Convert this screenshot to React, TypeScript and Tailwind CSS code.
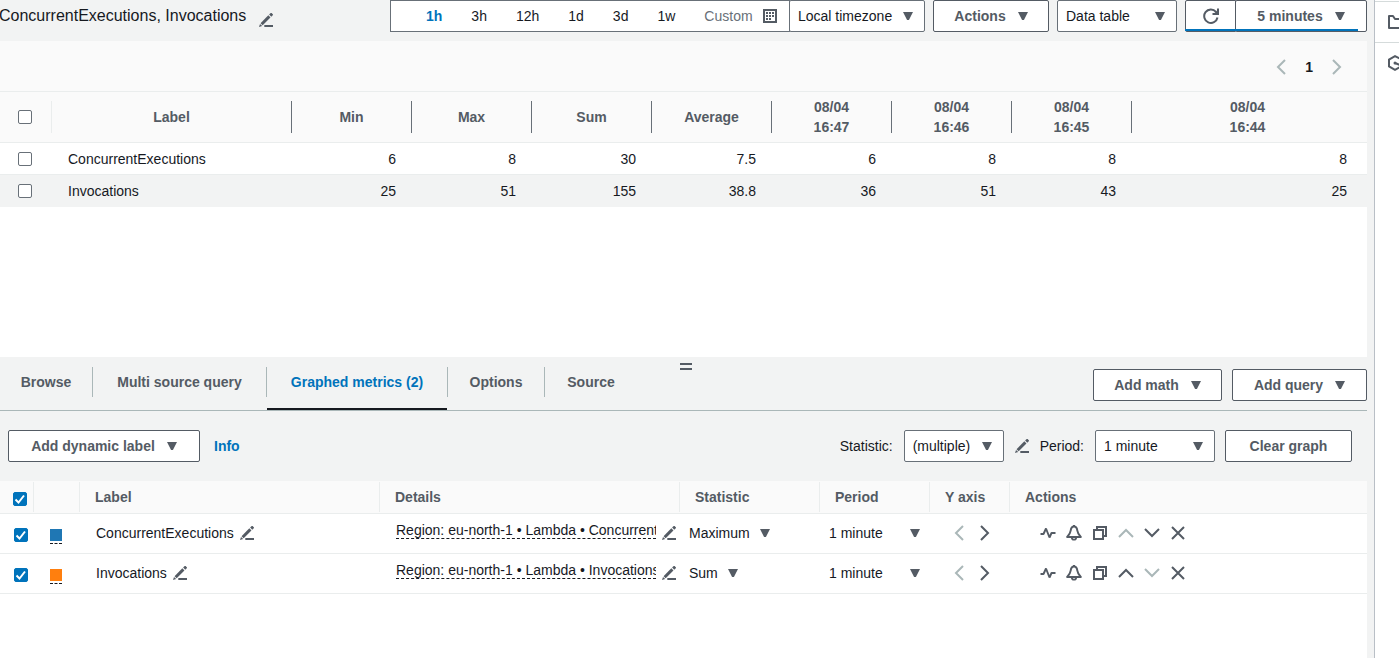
import React from "react";

type IconProps = { className?: string };

const Pencil = () => (
  <svg viewBox="0 0 14 14" className="size-3.5 shrink-0 text-[#545b64]" fill="none" stroke="currentColor" aria-hidden="true">
    <path d="M2.6 11.2 10.4 3.4" strokeWidth="3" />
    <path d="M11.2 2.6 13.2.6" strokeWidth="3" />
    <path d="M1 11 3.2 13 0 14z" fill="currentColor" stroke="none" />
    <path d="M5.3 13H14" strokeWidth="2" />
  </svg>
);

const Caret = ({ className = "" }: IconProps) => (
  <svg viewBox="0 0 10 8" className={`h-2 w-2.5 shrink-0 text-[#545b64] ${className}`} fill="currentColor" aria-hidden="true">
    <path d="M0 0H10L6.300 7.300a1.400 1.400 0 0 1-2.600 0z" />
  </svg>
);

const Icon = ({ children, className = "" }: { children: React.ReactNode; className?: string }) => (
  <svg viewBox="0 0 16 16" className={`size-4 shrink-0 ${className}`} fill="none" stroke="currentColor" strokeWidth="2" aria-hidden="true">
    {children}
  </svg>
);

const ChevronLeft = () => <Icon><path d="M12 1 5 8l7 7" /></Icon>;
const ChevronRight = () => <Icon><path d="m4 1 7 7-7 7" /></Icon>;
const ChevronUp = () => <Icon><path d="m1 12 7-7 7 7" /></Icon>;
const ChevronDown = () => <Icon><path d="m1 4 7 7 7-7" /></Icon>;
const Close = () => <Icon><path d="m2 2 12 12M14 2 2 14" /></Icon>;
const Pulse = () => <Icon><path d="M.5 9H3.500L6 3.500 9.500 12.500 11.500 8H15.500" strokeWidth="1.900" strokeLinejoin="bevel" /></Icon>;
const Bell = () => (
  <Icon>
    <path d="M8 1.500C6 1.500 5 3 4.700 5.500 4.400 8 3.500 9.500 1.200 12H14.800C12.500 9.500 11.600 8 11.300 5.500 11 3 10 1.500 8 1.500z" strokeLinejoin="round" />
    <path d="M8 0v2" />
    <path d="M5.800 12.500a2.200 2.200 0 0 0 4.400 0" strokeWidth="1.800" />
  </Icon>
);
const Copy = () => (
  <Icon>
    <path d="M2 5h9v9H2z" />
    <path d="M5 5V2h9v9h-3" />
  </Icon>
);
const Calendar = () => (
  <svg viewBox="0 0 14 14" className="size-3.5 shrink-0 text-[#545b64]" aria-hidden="true">
    <path d="M1 1h12v12H1z" fill="none" stroke="currentColor" strokeWidth="2" />
    <path d="M3 3h2v2H3zM6 3h2v2H6zM9 3h2v2H9zM3 6h2v2H3zM6 6h2v2H6zM9 6h2v2H9zM3 9h2v2H3zM6 9h2v2H6z" fill="currentColor" />
  </svg>
);
const Refresh = () => (
  <Icon>
    <path d="M14.500 9.500A6.700 6.700 0 1 1 13 3.800" />
    <path d="M15 .5V6H9.500" />
    <path d="M15 1.500V6h-4.500z" fill="currentColor" stroke="none" />
  </Icon>
);

const Checkbox = ({ label, checked = false }: { label: string; checked?: boolean }) => (
  <span className="grid size-3.5 shrink-0 place-items-center">
    <input
      type="checkbox"
      aria-label={label}
      defaultChecked={checked}
      className="peer col-start-1 row-start-1 size-3.5 appearance-none rounded-[2px] border border-[#687078] bg-white checked:border-[#0073bb] checked:bg-[#0073bb]"
    />
    <svg viewBox="0 0 14 14" className="pointer-events-none col-start-1 row-start-1 hidden size-3.5 peer-checked:block" fill="none" stroke="#fff" strokeWidth="2" aria-hidden="true">
      <path d="m2.5 7.5 3 3L11 3.5" />
    </svg>
  </span>
);

const Select = ({ id, label, options, className = "" }: { id: string; label?: string; options: string[]; className?: string }) => (
  <span className={`relative flex h-8 shrink-0 items-center ${className}`}>
    <select
      id={id}
      aria-label={label}
      className="h-8 w-full appearance-none rounded-[2px] border border-[#687078] bg-white pr-7 pl-2 text-sm text-[#16191f]"
    >
      {options.map((o) => <option key={o}>{o}</option>)}
    </select>
    <Caret className="pointer-events-none absolute right-3" />
  </span>
);

const Button = ({ children, caret = false, className = "" }: { children: React.ReactNode; caret?: boolean; className?: string }) => (
  <button
    type="button"
    className={`flex h-8 shrink-0 items-center justify-center gap-3 rounded-[2px] border border-[#545b64] bg-white text-sm font-bold whitespace-nowrap text-[#545b64] ${className}`}
  >
    {children}
    {caret && <Caret />}
  </button>
);

const stats = ["Min", "Max", "Sum", "Average"];
const times = ["16:47", "16:46", "16:45", "16:44"];
const rows = [
  { label: "ConcurrentExecutions", values: ["6", "8", "30", "7.5", "6", "8", "8", "8"] },
  { label: "Invocations", values: ["25", "51", "155", "38.8", "36", "51", "43", "25"] },
];

const metrics = [
  { label: "ConcurrentExecutions", color: "bg-[#1f77b4]", stat: "Maximum", first: true },
  { label: "Invocations", color: "bg-[#ff7f0e]", stat: "Sum", first: false },
];

const tabs = [
  { name: "Browse", width: "w-[92px]" },
  { name: "Multi source query", width: "w-[173px]" },
  { name: "Graphed metrics (2)", width: "w-[180px]", active: true },
  { name: "Options", width: "w-24" },
  { name: "Source", width: "w-[92px]" },
];

const ranges = ["1h", "3h", "12h", "1d", "3d", "1w"];

const TopBar = () => (
  <header className="flex h-[41px] items-start justify-between">
    <div className="flex h-8 items-center gap-[13px]">
      <h1 className="-ml-px text-base whitespace-nowrap">ConcurrentExecutions, Invocations</h1>
      <button type="button" aria-label="Edit title" className="pt-2"><Pencil /></button>
    </div>
    <div className="flex gap-2">
      <div className="flex">
        <div className="flex h-8 w-[400px] items-center gap-[29px] border border-[#687078] bg-white pl-[35px] text-sm">
          {ranges.map((r) => (
            <button key={r} type="button" className={r === "1h" ? "font-bold text-[#0073bb]" : ""}>{r}</button>
          ))}
          <button type="button" className="flex items-center gap-2.5 text-[#687078]">Custom <Calendar /></button>
        </div>
        <Select id="timezone" label="Timezone" options={["Local timezone", "UTC"]} className="-ml-px w-[136px]" />
      </div>
      <Button caret className="w-[116px]">Actions</Button>
      <Select id="widget" label="Widget type" options={["Data table", "Line", "Number"]} className="w-[120px]" />
      <div className="relative flex">
        <button type="button" aria-label="Refresh" className="grid h-8 w-[51px] place-items-center rounded-l-[2px] border border-[#545b64] bg-white text-[#545b64]"><Refresh /></button>
        <Button caret className="-ml-px w-[132px]">5 minutes</Button>
        <span className="absolute bottom-px left-0 h-0.5 w-[173px] bg-[#0073bb]" />
      </div>
    </div>
  </header>
);

const DataTable = () => (
  <section className="min-h-[316px] bg-white">
    <nav aria-label="Pagination" className="flex h-[50px] items-center justify-end gap-4 bg-[#fafafa] pt-0.5 pr-5.5 text-[#aab7b8]">
      <button type="button" aria-label="Previous page"><ChevronLeft /></button>
      <button type="button" className="text-sm font-bold text-[#16191f]">1</button>
      <button type="button" aria-label="Next page"><ChevronRight /></button>
    </nav>
    <table className="w-full table-fixed border-separate border-spacing-0 text-sm">
      <colgroup>
        <col className="w-[52px]" />
        <col className="w-60" />
        {[...stats, ...times.slice(1)].map((c) => <col key={c} className="w-[120px]" />)}
        <col />
      </colgroup>
      <thead className="bg-[#fafafa] text-[#545b64]">
        <tr className="h-[52px]">
          <th className="border-y border-[#eaeded] p-0">
            <div className="flex h-8 items-center border-r border-[#eaeded] pl-[18px]"><Checkbox label="Select all rows" /></div>
          </th>
          {["Label", ...stats].map((c) => (
            <th key={c} className="border-y border-[#eaeded] p-0">
              <div className="flex h-8 items-center justify-center border-r border-[#687078]">{c}</div>
            </th>
          ))}
          {times.map((t, i) => (
            <th key={t} className="border-y border-[#eaeded] p-0">
              <div className={`flex h-8 items-center justify-center leading-5 ${i < 3 ? "border-r border-[#687078]" : "pr-1"}`}>
                <span>08/04<br />{t}</span>
              </div>
            </th>
          ))}
        </tr>
      </thead>
      <tbody>
        {rows.map((r, i) => (
          <tr key={r.label} className={i === 1 ? "h-8 bg-[#f2f3f3]" : "h-8"}>
            <td className={`p-0 pl-[18px] ${i === 0 ? "border-b border-[#eaeded]" : ""}`}><Checkbox label={`Select ${r.label}`} /></td>
            <td className={`p-0 pl-4 ${i === 0 ? "border-b border-[#eaeded]" : ""}`}>{r.label}</td>
            {r.values.map((v, j) => (
              <td key={j} className={`p-0 text-right ${j === 7 ? "pr-5" : "pr-4"} ${i === 0 ? "border-b border-[#eaeded]" : ""}`}>{v}</td>
            ))}
          </tr>
        ))}
      </tbody>
    </table>
  </section>
);

const Tabs = () => (
  <div className="relative flex h-[54px] justify-between border-b border-[#aab7b8]">
    <div role="tablist" className="flex items-start">
      {tabs.map((t, i) => (
        <React.Fragment key={t.name}>
          <button
            type="button"
            role="tab"
            aria-selected={!!t.active}
            className={`h-[53px] text-center text-sm font-bold whitespace-nowrap ${t.width} ${t.active ? "border-b-2 border-[#16191f] pb-px text-[#0073bb]" : "pb-1 text-[#545b64]"}`}
          >
            {t.name}
          </button>
          {i < tabs.length - 1 && <span className="mt-2.5 h-[30px] w-px bg-[#aab7b8]" />}
        </React.Fragment>
      ))}
    </div>
    <div className="flex items-center gap-2.5 pt-0.5">
      <Button caret className="w-[129px]">Add math</Button>
      <Button caret className="w-[135px]">Add query</Button>
    </div>
    <span className="absolute top-1.5 left-1/2 -ml-1 h-[7px] w-3 border-y-2 border-[#545b64]" />
  </div>
);

const Toolbar = () => (
  <div className="flex h-[70px] items-center justify-between pr-[15px] pl-2 text-sm">
    <div className="flex items-center gap-3.5">
      <Button caret className="w-48">Add dynamic label</Button>
      <a href="#info" className="font-bold text-[#0073bb]">Info</a>
    </div>
    <div className="flex items-center gap-[11px]">
      <label htmlFor="statistic">Statistic:</label>
      <Select id="statistic" options={["(multiple)"]} className="w-[100px]" />
      <button type="button" aria-label="Edit statistic"><Pencil /></button>
      <label htmlFor="period">Period:</label>
      <div className="flex gap-2.5">
        <Select id="period" options={["1 minute", "5 minutes"]} className="w-[120px]" />
        <Button className="w-[127px]">Clear graph</Button>
      </div>
    </div>
  </div>
);

const headCols = [
  { name: "Label", width: "w-[300px]" },
  { name: "Details", width: "w-[300px]" },
  { name: "Statistic", width: "w-[140px]" },
  { name: "Period", width: "w-[110px]" },
  { name: "Y axis", width: "w-20" },
  { name: "Actions", width: "" },
];

const MetricsTable = () => (
  <section className="flex-1 bg-white">
    <table className="w-full table-fixed border-separate border-spacing-0 text-sm">
      <colgroup>
        <col className="w-[34px]" />
        <col className="w-[46px]" />
        {headCols.map((c) => <col key={c.name} className={c.width} />)}
      </colgroup>
      <thead className="bg-[#fafafa] text-left text-[#545b64]">
        <tr className="h-[33px]">
          <th className="border-b border-[#eaeded] p-0">
            <div className="flex h-[30px] items-center border-r border-[#eaeded] pt-1 pl-[13px]"><Checkbox label="Select all metrics" checked /></div>
          </th>
          <th className="border-b border-[#eaeded] p-0"><div className="h-[30px] border-r border-[#eaeded]" /></th>
          {headCols.map((c, i) => (
            <th key={c.name} className="border-b border-[#eaeded] p-0">
              <div className={`flex h-[30px] items-center pl-[15px] ${i < 5 ? "border-r border-[#eaeded]" : ""}`}>{c.name}</div>
            </th>
          ))}
        </tr>
      </thead>
      <tbody className="[&_td]:border-b [&_td]:border-[#eaeded] [&_td]:p-0 [&_td]:pb-0.5">
        {metrics.map((m) => (
          <tr key={m.label} className="h-10">
            <td><div className="flex pt-1 pl-3.5"><Checkbox label={`Graph ${m.label}`} checked /></div></td>
            <td>
              <button type="button" aria-label={`Color of ${m.label}`} className="ml-4 block border-b border-dashed border-[#16191f] pt-2 pb-0.5">
                <span className={`block size-3 ${m.color}`} />
              </button>
            </td>
            <td>
              <div className="flex items-center gap-1.5 pl-4">
                {m.label}
                <button type="button" aria-label={`Edit label ${m.label}`}><Pencil /></button>
              </div>
            </td>
            <td>
              <div className="flex items-center gap-1.5 pl-4">
                <span className="mb-1.5 h-[18px] w-[260px] overflow-hidden border-b border-dashed border-[#16191f] leading-[18px] whitespace-nowrap">
                  Region: eu-north-1 • Lambda • {m.label}
                </span>
                <button type="button" aria-label={`Edit details of ${m.label}`}><Pencil /></button>
              </div>
            </td>
            <td>
              <span className="relative flex w-fit items-center pl-[9px]">
                <select aria-label={`Statistic of ${m.label}`} defaultValue={m.stat} className="field-sizing-content appearance-none bg-transparent pr-5">
                  <option>{m.stat}</option>
                  <option>Average</option>
                </select>
                <Caret className="pointer-events-none absolute right-0" />
              </span>
            </td>
            <td>
              <span className="relative flex w-[100px] items-center pl-[9px]">
                <select aria-label={`Period of ${m.label}`} className="w-full appearance-none bg-transparent">
                  <option>1 minute</option>
                  <option>5 minutes</option>
                </select>
                <Caret className="pointer-events-none absolute right-0" />
              </span>
            </td>
            <td>
              <div className="flex gap-2.5 pl-[21px] text-[#545b64]">
                <button type="button" aria-label="Left axis" disabled className="text-[#aab7b8]"><ChevronLeft /></button>
                <button type="button" aria-label="Right axis"><ChevronRight /></button>
              </div>
            </td>
            <td>
              <div className="flex gap-2.5 pl-[30px] text-[#545b64]">
                <button type="button" aria-label="Anomaly detection"><Pulse /></button>
                <button type="button" aria-label="Create alarm"><Bell /></button>
                <button type="button" aria-label="Duplicate"><Copy /></button>
                <button type="button" aria-label="Move up" disabled={m.first} className="disabled:text-[#aab7b8]"><ChevronUp /></button>
                <button type="button" aria-label="Move down" disabled={!m.first} className="disabled:text-[#aab7b8]"><ChevronDown /></button>
                <button type="button" aria-label="Remove"><Close /></button>
              </div>
            </td>
          </tr>
        ))}
      </tbody>
    </table>
  </section>
);

const SideRail = () => (
  <aside className="w-[25px] shrink-0 overflow-hidden border-l border-[#b9bfc6] bg-white pt-px text-[#545b64]">
    <button type="button" aria-label="Files" className="flex h-[42px] w-full items-center border-y border-[#d5dbdb] pl-3">
      <Icon><path d="M2 2h4l2 3h7v9H2z" strokeLinejoin="round" /></Icon>
    </button>
    <button type="button" aria-label="Insights" className="flex h-10 w-full items-center pl-3">
      <Icon>
        <path d="M14.500 6V4.500L8 1.200 2 4.600v6.800l6 3.400 5-2.800" />
        <path d="M8 8l5 2" />
        <circle cx="8" cy="8" r="1.500" fill="currentColor" stroke="none" />
      </Icon>
    </button>
  </aside>
);

export default function App() {
  return (
    <div className="flex min-h-screen bg-white font-['Liberation_Sans',Arial,sans-serif] text-[#16191f]">
      <main className="flex min-w-0 flex-1 flex-col bg-[#f2f3f3] pr-[7px]">
        <TopBar />
        <DataTable />
        <Tabs />
        <Toolbar />
        <MetricsTable />
      </main>
      <SideRail />
    </div>
  );
}
